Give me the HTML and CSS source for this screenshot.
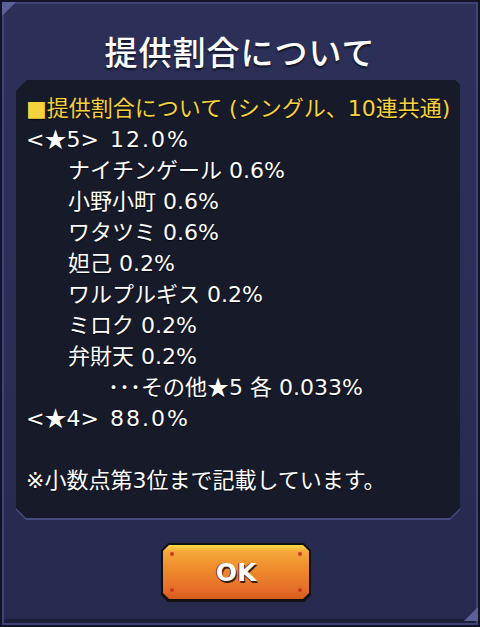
FILE: index.html
```html
<!DOCTYPE html>
<html lang="ja">
<head>
  <meta charset="UTF-8" />
  <meta name="viewport" content="width=device-width, initial-scale=1.0"/>
  <title>提供割合について</title>
  <link rel="stylesheet" href="styles.css">
</head>
<body>
  <div class="frame">
    <h1 class="title">提供割合について</h1>

    <div class="box-edge">
      <div class="box">
        <p class="line heading">■提供割合について (シングル、10連共通)</p>
        <p class="line">&lt;<span class="star">★</span>5&gt;&ensp;<span class="num">12.0%</span></p>
        <p class="line indent">ナイチンゲール 0.6%</p>
        <p class="line indent">小野小町 0.6%</p>
        <p class="line indent">ワタツミ 0.6%</p>
        <p class="line indent">妲己 0.2%</p>
        <p class="line indent">ワルプルギス 0.2%</p>
        <p class="line indent">ミロク 0.2%</p>
        <p class="line indent">弁財天 0.2%</p>
        <p class="line indent-2">･･･その他<span class="star">★</span>5 各 0.033%</p>
        <p class="line">&lt;<span class="star">★</span>4&gt;&ensp;<span class="num">88.0%</span></p>
        <p class="line">&nbsp;</p>
        <p class="line">※小数点第3位まで記載しています。</p>
      </div>
    </div>

    <div class="actions">
      <button class="ok-button">
        <span class="dot tl"></span><span class="dot tr"></span>
        <span class="dot bl"></span><span class="dot br"></span>
        OK
      </button>
    </div>
  </div>
</body>
</html>
```

FILE: styles.css
```css
body {
  margin: 0;
  background: #0e1020;
  font-family: 'DejaVu Sans', 'Noto Sans CJK JP', sans-serif;
  color: #fff;
}

.frame {
  position: relative;
  width: 480px;
  height: 627px;
  box-sizing: border-box;
  padding: 20px 18px 0 14px;
  background: linear-gradient(to bottom, #2c3058 0%, #2a2d54 60%, #272a4e 100%);
  border: 2px solid #121426;
  box-shadow: inset 0 0 0 2px #3e4475, inset 0 -6px 0 0 #1c1f3a;
  overflow: hidden;
}

/* corner notches */
.frame::before,
.frame::after {
  content: "";
  position: absolute;
  width: 14px;
  height: 14px;
  background: #5a6196;
}

.frame::before {
  top: 0;
  left: 0;
  clip-path: polygon(0 0, 100% 0, 0 100%);
}

.frame::after {
  bottom: 4px;
  right: 0;
  clip-path: polygon(100% 0, 100% 100%, 0 100%);
}

.title {
  margin: 0;
  height: 58px;
  line-height: 58px;
  text-align: center;
  font-family: 'Noto Sans CJK JP', sans-serif;
  font-size: 33px;
  font-weight: 500;
  letter-spacing: 1px;
  padding-left: 4px;
  text-shadow: 0 2px 2px rgba(0, 0, 0, 0.6);
}

.box-edge {
  height: 440px;
  background: #454b7c;
  clip-path: polygon(10px 0, calc(100% - 4px) 0, 100% 4px, 100% calc(100% - 10px), calc(100% - 10px) 100%, 10px 100%, 0 calc(100% - 10px), 0 10px);
}

.box {
  height: 438px;
  box-sizing: border-box;
  padding: 13px 0 0 10px;
  background: #161a29;
  clip-path: polygon(10px 0, calc(100% - 4px) 0, 100% 4px, 100% calc(100% - 10px), calc(100% - 10px) 100%, 10px 100%, 0 calc(100% - 10px), 0 10px);
}

.line {
  margin: 0;
  font-size: 22px;
  line-height: 31px;
  height: 31px;
  white-space: nowrap;
  text-shadow: 0 1px 1px rgba(0, 0, 0, 0.7);
}

.star {
  font-family: 'Noto Sans CJK JP', sans-serif;
  line-height: 0;
}

.num {
  letter-spacing: 2px;
}

.heading {
  color: #f6d33c;
}

.indent {
  padding-left: 42px;
}

.indent-2 {
  padding-left: 82px;
}

.actions {
  display: flex;
  justify-content: center;
  padding: 23px 4px 0 0;
}

.ok-button {
  position: relative;
  width: 150px;
  height: 59px;
  border: none;
  padding: 0;
  background: #111;
  clip-path: polygon(7px 0, calc(100% - 7px) 0, 100% 7px, 100% calc(100% - 7px), calc(100% - 7px) 100%, 7px 100%, 0 calc(100% - 7px), 0 7px);
  font-family: 'DejaVu Sans', 'Noto Sans', sans-serif;
  font-size: 25px;
  font-weight: 700;
  color: #fff;
  text-shadow: 1px 2px 0 #3a1a08, -1px 0 0 #5a2a10;
  cursor: pointer;
  z-index: 0;
}

.ok-button::before {
  content: "";
  position: absolute;
  inset: 2px 2px 3px 2px;
  background: linear-gradient(to bottom, #ffd84a 0%, #f6a83a 12%, #ee8a2c 45%, #e6702a 80%, #d85a1e 100%);
  clip-path: polygon(6px 0, calc(100% - 6px) 0, 100% 6px, 100% calc(100% - 6px), calc(100% - 6px) 100%, 6px 100%, 0 calc(100% - 6px), 0 6px);
  z-index: -1;
}

.dot {
  position: absolute;
  width: 4px;
  height: 4px;
  border-radius: 50%;
  background: #c8381c;
}

.dot.tl { top: 9px; left: 9px; }
.dot.tr { top: 9px; right: 9px; }
.dot.bl { bottom: 10px; left: 9px; }
.dot.br { bottom: 10px; right: 9px; }
```
